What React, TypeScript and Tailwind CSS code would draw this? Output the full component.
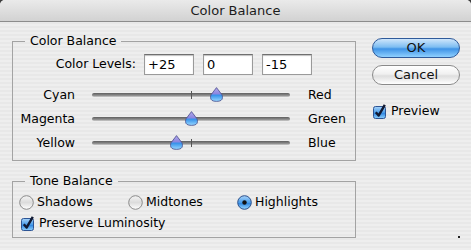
import React from 'react';

const font = { fontFamily: '"DejaVu Sans", "Liberation Sans", sans-serif' };

// Pulgar del slider: gota azul que apunta hacia arriba
const Thumb = ({ id }: { id: string }) => (
  <svg width="13" height="15" viewBox="0 0 13 15">
    <defs>
      <linearGradient id={id} x1="0" y1="0" x2="0" y2="1">
        <stop offset="0" stopColor="#b3a9ec" />
        <stop offset="0.45" stopColor="#8b86e0" />
        <stop offset="0.55" stopColor="#3592ea" />
        <stop offset="1" stopColor="#9ad8ff" />
      </linearGradient>
    </defs>
    <path
      d="M6.5 0.6 L11.8 7.6 Q12.5 8.8 12.5 10.4 Q12.5 14.4 6.5 14.4 Q0.5 14.4 0.5 10.4 Q0.5 8.8 1.2 7.6 Z"
      fill={`url(#${id})`}
      stroke="#4b4f8c"
      strokeWidth="0.8"
    />
  </svg>
);

const Slider = ({ left, right, value, id }: { left: string; right: string; value: number; id: string }) => (
  <div className="flex h-[24px] items-center">
    <span className="w-[62px] text-right">{left}</span>
    <div className="relative ml-[17px] h-[24px] w-[198px]">
      <div className="absolute left-0 right-0 top-[10px] h-[4px] rounded-full bg-[linear-gradient(to_bottom,#5e5e5e,#8c8c8c_60%,#d0d0d0)]" />
      <div className="absolute left-[99px] top-[8px] h-[8px] w-[1px] bg-[#555]" />
      <div className="absolute top-[4px]" style={{ left: 99 + (value / 100) * 99 - 6 }}>
        <Thumb id={id} />
      </div>
    </div>
    <span className="ml-[18px]">{right}</span>
  </div>
);

const Checkbox = ({ id }: { id: string }) => (
  <svg width="15" height="15" viewBox="0 0 15 15">
    <defs>
      <linearGradient id={id} x1="0" y1="0" x2="0" y2="1">
        <stop offset="0" stopColor="#a9d4fa" />
        <stop offset="0.5" stopColor="#4b9de9" />
        <stop offset="0.55" stopColor="#2f86e0" />
        <stop offset="1" stopColor="#8fd2ff" />
      </linearGradient>
    </defs>
    <rect x="0.5" y="2.5" width="12" height="12" rx="2" fill={`url(#${id})`} stroke="#2d5494" />
    <path d="M2.8 8.2 L5.6 11.6 L11.8 0.8" fill="none" stroke="#111a33" strokeWidth="2.4" strokeLinejoin="round" />
  </svg>
);

const Radio = ({ on, id }: { on?: boolean; id: string }) => (
  <svg width="15" height="15" viewBox="0 0 15 15">
    <defs>
      <linearGradient id={id} x1="0" y1="0" x2="0" y2="1">
        {on ? (
          <>
            <stop offset="0" stopColor="#a9d4fa" />
            <stop offset="0.5" stopColor="#4b9de9" />
            <stop offset="0.55" stopColor="#2f86e0" />
            <stop offset="1" stopColor="#9ad8ff" />
          </>
        ) : (
          <>
            <stop offset="0" stopColor="#f4f4f4" />
            <stop offset="0.5" stopColor="#dcdcdc" />
            <stop offset="1" stopColor="#ffffff" />
          </>
        )}
      </linearGradient>
    </defs>
    <circle cx="7.5" cy="7.5" r="6.8" fill={`url(#${id})`} stroke={on ? '#2d4f8a' : '#8a8a8a'} />
    {on && <circle cx="7.5" cy="7.5" r="2.2" fill="#111" />}
  </svg>
);

const inputCls =
  'h-[21px] w-[50px] bg-white border border-[#9a9a9a] border-t-[#6f6f6f] shadow-[inset_0_1px_1px_rgba(0,0,0,0.25)] pl-[3px] text-[13px] leading-[19px] text-black';

const App = () => {
  return (
    <div className="h-[250px] w-[471px] bg-[#3c3c3c] text-[12.5px] text-black" style={font}>
      <div className="relative flex h-[250px] flex-col overflow-hidden rounded-t-[5px] bg-[repeating-linear-gradient(to_bottom,#eeeeee_0px,#eeeeee_2px,#e8e8e8_2px,#e8e8e8_4px)]">
        {/* barra de título */}
        <div className="flex h-[22px] items-center justify-center border-b border-[#8c8c8c] bg-[linear-gradient(to_bottom,#eaeaea,#d2d2d2)] text-[13px] text-[#1c1c1c]">
          Color Balance
        </div>

        <div className="flex">
          <div className="ml-[12px] mt-[11px] w-[344px]">
            <fieldset className="border border-[#a3a3a3]">
              <legend className="ml-[12px] px-[5px] leading-[16px]">Color Balance</legend>
              <div className="pb-[5px] pt-[5px]">
                <div className="flex h-[21px] items-center">
                  <span className="w-[123px] text-right">Color Levels:</span>
                  <div className="ml-[8px] flex gap-[9px]">
                    <div className={inputCls}>+25</div>
                    <div className={inputCls}>0</div>
                    <div className={inputCls}>-15</div>
                  </div>
                </div>
                <div className="mt-[8px]">
                  <Slider left="Cyan" right="Red" value={25} id="t1" />
                  <Slider left="Magenta" right="Green" value={0} id="t2" />
                  <Slider left="Yellow" right="Blue" value={-15} id="t3" />
                </div>
              </div>
            </fieldset>

            <fieldset className="mt-[12px] border border-[#a3a3a3]">
              <legend className="ml-[12px] px-[5px] leading-[16px]">Tone Balance</legend>
              <div className="pb-[6px] pl-[6px] pt-[5px]">
                <div className="flex h-[16px] items-center">
                  <label className="flex w-[109px] items-center gap-[3px]">
                    <Radio id="r1" />
                    Shadows
                  </label>
                  <label className="flex w-[109px] items-center gap-[3px]">
                    <Radio id="r2" />
                    Midtones
                  </label>
                  <label className="flex items-center gap-[3px]">
                    <Radio on id="r3" />
                    Highlights
                  </label>
                </div>
                <label className="mt-[5px] flex h-[16px] items-center gap-[3px] pl-[2px]">
                  <Checkbox id="c1" />
                  Preserve Luminosity
                </label>
              </div>
            </fieldset>
          </div>

          <div className="ml-[16px] mt-[16px] flex w-[88px] flex-col">
            <button className="h-[20px] rounded-full border border-[#2f5a9a] bg-[linear-gradient(to_bottom,#cfe6fb,#7dbdf2_45%,#3f93e6_55%,#8fd0ff)] text-[13px] leading-[18px] text-[#111]">
              OK
            </button>
            <button className="mt-[7px] h-[20px] rounded-full border border-[#8a8a8a] bg-[linear-gradient(to_bottom,#ffffff,#f0f0f0_45%,#dedede_55%,#ffffff)] text-[13px] leading-[18px] text-[#111]">
              Cancel
            </button>
            <label className="mt-[17px] flex items-center gap-[3px] pl-[1px]">
              <Checkbox id="c2" />
              Preview
            </label>
          </div>
        </div>

        <div className="absolute left-[458px] top-[236px] h-[2px] w-[2px] bg-[#222]" />
      </div>
    </div>
  );
};

export default App;
